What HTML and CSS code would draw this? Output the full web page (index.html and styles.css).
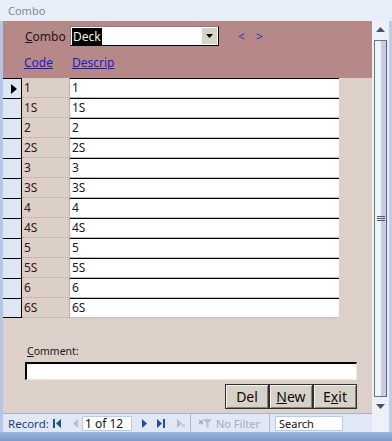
FILE: index.html
```html
<!DOCTYPE html>
<html lang="en">
<head>
  <meta charset="UTF-8" />
  <title>Combo</title>
  <link rel="stylesheet" href="styles.css">
</head>
<body>
  <div class="window">
    <div class="titlebar">Combo</div>

    <div class="frame">
      <div class="edge-left"></div>

      <div class="main">
        <div class="form">
          <!-- form header -->
          <div class="header">
            <div class="combo-row">
              <span class="combo-label"><u>C</u>ombo</span>
              <div class="combo">
                <span class="combo-sel">Deck</span>
                <span class="combo-drop">
                  <svg width="7" height="4" viewBox="0 0 7 4"><polygon points="0,0 7,0 3.5,4" fill="#000"/></svg>
                </span>
              </div>
              <span class="step step-prev">&lt;</span>
              <span class="step">&gt;</span>
            </div>
            <div class="col-links">
              <a class="link link-code">Code</a>
              <a class="link">Descrip</a>
            </div>
          </div>

          <!-- datasheet rows -->
          <div class="grid">
            <div class="row current"><span class="sel"><svg width="6" height="10" viewBox="0 0 6 10"><polygon points="0,0 6,5 0,10" fill="#000"/></svg></span><span class="code">1</span><span class="desc">1</span></div>
            <div class="row"><span class="sel"></span><span class="code">1S</span><span class="desc">1S</span></div>
            <div class="row"><span class="sel"></span><span class="code">2</span><span class="desc">2</span></div>
            <div class="row"><span class="sel"></span><span class="code">2S</span><span class="desc">2S</span></div>
            <div class="row"><span class="sel"></span><span class="code">3</span><span class="desc">3</span></div>
            <div class="row"><span class="sel"></span><span class="code">3S</span><span class="desc">3S</span></div>
            <div class="row"><span class="sel"></span><span class="code">4</span><span class="desc">4</span></div>
            <div class="row"><span class="sel"></span><span class="code">4S</span><span class="desc">4S</span></div>
            <div class="row"><span class="sel"></span><span class="code">5</span><span class="desc">5</span></div>
            <div class="row"><span class="sel"></span><span class="code">5S</span><span class="desc">5S</span></div>
            <div class="row"><span class="sel"></span><span class="code">6</span><span class="desc">6</span></div>
            <div class="row last"><span class="sel"></span><span class="code">6S</span><span class="desc">6S</span></div>
          </div>

          <!-- footer -->
          <div class="detail">
            <div class="comment-label"><u>C</u>omment:</div>
            <div class="comment-box"></div>
            <div class="buttons">
              <button class="btn">Del</button>
              <button class="btn"><u>N</u>ew</button>
              <button class="btn">E<u>x</u>it</button>
            </div>
          </div>
        </div>

        <div class="navbar">
          <span class="nav-label">Record:</span>
          <svg class="nav-first" width="8" height="9" viewBox="0 0 8 9"><rect x="0" y="0" width="2" height="9" fill="#1f4f8f"/><polygon points="8,0 3,4.5 8,9" fill="#1f4f8f"/></svg>
          <svg class="nav-prev" width="5" height="9" viewBox="0 0 5 9"><polygon points="5,0 0,4.5 5,9" fill="#b4bccb"/></svg>
          <span class="nav-box">1 of 12</span>
          <svg class="nav-next" width="5" height="9" viewBox="0 0 5 9"><polygon points="0,0 5,4.5 0,9" fill="#1f4f8f"/></svg>
          <svg class="nav-last" width="8" height="9" viewBox="0 0 8 9"><polygon points="0,0 5,4.5 0,9" fill="#1f4f8f"/><rect x="6" y="0" width="2" height="9" fill="#1f4f8f"/></svg>
          <svg class="nav-new" width="8" height="9" viewBox="0 0 8 9"><polygon points="0,0 5,4.5 0,9" fill="#b4bccb"/><rect x="5" y="5" width="3" height="3" fill="#c8ccd8"/></svg>
          <span class="nav-sep"></span>
          <svg class="nav-filter" width="13" height="11" viewBox="0 0 13 11"><polygon points="4,1 13,1 9.5,5 9.5,10 7.5,9 7.5,5" fill="#b8c0cc"/><path d="M0 2 L4 6 M4 2 L0 6" stroke="#a0a8b8" stroke-width="1.3"/></svg>
          <span class="nav-filter-text">No Filter</span>
          <span class="nav-sep"></span>
          <span class="nav-search">Search</span>
        </div>
      </div>

      <div class="scrollbar">
        <div class="sb-arrow">
          <svg width="9" height="5" viewBox="0 0 9 5"><polygon points="4.5,0 9,5 0,5" fill="#4a5070"/></svg>
        </div>
        <div class="sb-thumb">
          <span class="sb-grip"></span>
        </div>
        <div class="sb-arrow">
          <svg width="9" height="5" viewBox="0 0 9 5"><polygon points="0,0 9,0 4.5,5" fill="#4a5070"/></svg>
        </div>
      </div>

      <div class="edge-right"></div>
    </div>

    <div class="bottom"></div>
  </div>
</body>
</html>
```

FILE: styles.css
```css
html, body {
  margin: 0;
  padding: 0;
}

body {
  width: 392px;
  height: 441px;
  overflow: hidden;
  font-family: "Noto Sans", "DejaVu Sans", sans-serif;
  background: #e6edf7;
  color: #201418;
}

.window {
  display: flex;
  flex-direction: column;
  height: 441px;
}

.titlebar {
  height: 21px;
  padding-left: 8px;
  font-size: 11px;
  line-height: 22px;
  color: #8088a0;
  background: #e8eef8;
}

.frame {
  flex: 1;
  display: flex;
}

.edge-left {
  width: 3px;
  background: #b4c6e6;
}

.edge-right {
  width: 3px;
  background: #bccfea;
}

.main {
  width: 369px;
  display: flex;
  flex-direction: column;
}

.form {
  flex: 1;
  display: flex;
  flex-direction: column;
  background: #dcd0c8;
}

/* Header of the form */
.header {
  height: 57px;
  box-sizing: border-box;
  padding: 5px 0 0 22px;
  background: #b78888;
}

.combo-row {
  display: flex;
  align-items: center;
  height: 20px;
}

.combo-label {
  width: 45px;
  font-size: 12px;
}

.combo {
  width: 149px;
  height: 20px;
  box-sizing: border-box;
  display: flex;
  align-items: center;
  padding-left: 1px;
  background: #fff;
  border-top: 1px solid #808080;
  border-left: 1px solid #808080;
  border-right: 1px solid #000;
  border-bottom: 1px solid #000;
}

.combo-sel {
  height: 17px;
  padding: 0 1px;
  font-size: 12px;
  line-height: 17px;
  color: #f4f8e0;
  background: #000;
}

.combo-drop {
  margin-left: auto;
  margin-right: 1px;
  width: 15px;
  height: 16px;
  display: flex;
  align-items: center;
  justify-content: center;
  background: #d8d4c4;
}

.step {
  margin-left: 12px;
  width: 6px;
  font-size: 12px;
  color: #2a30c8;
}

.step-prev {
  margin-left: 19px;
}

.col-links {
  display: flex;
  margin: 8px 0 0 -1px;
}

.link {
  font-size: 12px;
  color: #1a1ad0;
  text-decoration: underline;
}

.link-code {
  width: 48px;
}

/* Datasheet */
.grid {
  display: flex;
  flex-direction: column;
}

.row {
  display: flex;
  height: 20px;
  font-size: 12px;
}

.row .sel {
  width: 19px;
  box-sizing: border-box;
  display: flex;
  align-items: center;
  padding-left: 8px;
  background: #dde6f2;
  border-top: 1px solid #000;
  border-right: 1px solid #000;
}

.row.last .sel {
  border-bottom: 1px solid #000;
}

.row .code {
  width: 48px;
  box-sizing: border-box;
  padding-left: 2px;
  line-height: 20px;
  color: #3a1418;
  background: #dccfc8;
  border-right: 1px dotted #9a9088;
  border-bottom: 1px dotted #b0a49c;
}

.row .desc {
  width: 269px;
  box-sizing: border-box;
  padding-left: 2px;
  line-height: 18px;
  color: #101834;
  background: #fff;
  border-top: 1px solid #000;
  border-bottom: 1px solid #c4c0b8;
}

/* Comment and buttons */
.detail {
  padding: 26px 16px 0 22px;
}

.comment-label {
  height: 14px;
  padding-left: 2px;
  font-size: 10.5px;
  line-height: 14px;
  color: #201418;
}

.comment-box {
  margin-top: 4px;
  width: 332px;
  height: 18px;
  box-sizing: border-box;
  background: #fff;
  border-top: 2px solid #000;
  border-left: 2px solid #000;
  border-right: 1px solid #f0ecd8;
  border-bottom: 1px solid #f0ecd8;
}

.buttons {
  display: flex;
  justify-content: flex-end;
  margin-top: 4px;
  margin-right: -1px;
}

.btn {
  width: 44px;
  height: 25px;
  padding: 0;
  font-family: "Noto Sans", "DejaVu Sans", sans-serif;
  font-size: 14px;
  color: #100808;
  background: #d6d2c8;
  border: 1px solid #303030;
  box-shadow: inset 1px 1px #f4f2ec, inset -1px -1px #808080;
}

/* Record navigation bar */
.navbar {
  height: 19px;
  box-sizing: border-box;
  display: flex;
  align-items: center;
  background: #dfe8f4;
  border-top: 1px solid #9cb4d8;
  font-size: 11.5px;
}

.nav-label {
  width: 45px;
  padding-left: 5px;
  color: #1e3f7a;
}

.nav-prev { margin-left: 12px; }

.nav-box {
  margin-left: 4px;
  width: 50px;
  height: 15px;
  box-sizing: border-box;
  padding-left: 2px;
  font-size: 12px;
  line-height: 13px;
  color: #101020;
  background: #fff;
  border: 1px solid #b8cce4;
}

.nav-next { margin-left: 10px; }
.nav-last { margin-left: 10px; }
.nav-new { margin-left: 12px; }

.nav-sep {
  margin-left: 5px;
  width: 1px;
  height: 18px;
  background: #a8bcd8;
}

.nav-filter { margin-left: 8px; }

.nav-filter-text {
  margin-left: 4px;
  width: 50px;
  font-size: 11px;
  color: #a4acbc;
}

.nav-filter-text + .nav-sep {
  margin-left: 3px;
}

.nav-search {
  margin-left: 5px;
  width: 68px;
  height: 15px;
  box-sizing: border-box;
  padding-left: 3px;
  font-size: 11px;
  line-height: 13px;
  color: #101020;
  background: #fff;
  border: 1px solid #b8cce4;
}

/* Vertical scrollbar */
.scrollbar {
  width: 17px;
  display: flex;
  flex-direction: column;
  background: #eef2f8;
}

.sb-arrow {
  height: 17px;
  display: flex;
  align-items: center;
  justify-content: center;
}

.sb-thumb {
  margin: 2px 0 1px 2px;
  width: 13px;
  height: 357px;
  box-sizing: border-box;
  display: flex;
  align-items: center;
  justify-content: center;
  border: 1px solid #4f7f88;
  border-right-color: #50608a;
  background: linear-gradient(to right, #f2f4f8 55%, #c8cce8 55%);
}

.sb-grip {
  width: 8px;
  height: 5px;
  background: repeating-linear-gradient(to bottom, #505870 0 1px, transparent 1px 2px);
}

.bottom {
  height: 9px;
  background: linear-gradient(to bottom, #9fb6dc, #7c98c8);
}
```
